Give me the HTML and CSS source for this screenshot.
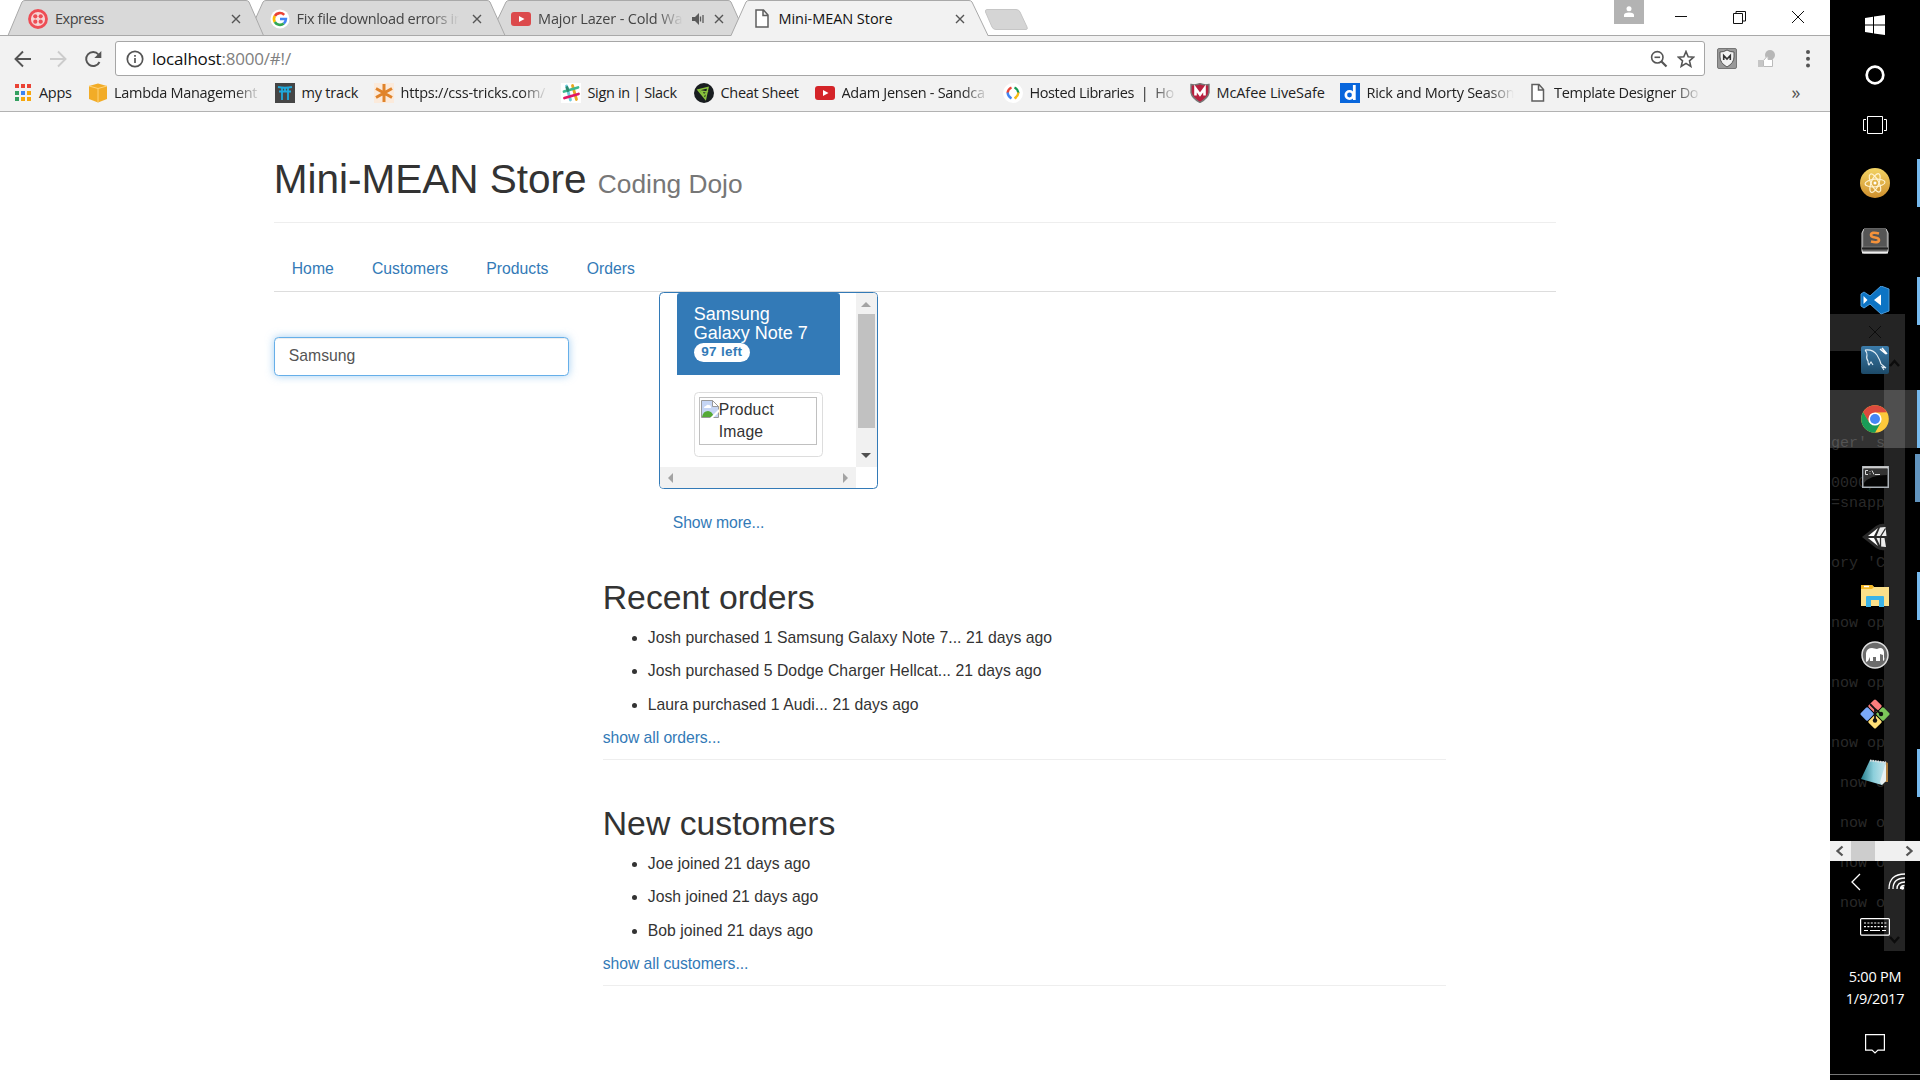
FILE: index.html
```html
<!DOCTYPE html>
<html lang="en">
<head>
<meta charset="utf-8">
<title>Mini-MEAN Store</title>
<link rel="stylesheet" href="styles.css">
</head>
<body>
<div class="desktop">
<div class="browser">
  <header class="tabstrip">
    <svg class="tab-shapes" width="1830" height="36" viewBox="0 0 1830 36">
      <g fill="#d9d9d9" stroke="#a9a9a9">
        <path d="M490 35.500L506 2Q507 .5 509 .5H728Q730 .5 731 2L746 35.500z"/>
        <path d="M248 35.500L263 2Q264 .5 266 .5H487Q489 .5 490 2L505 35.500z"/>
        <path d="M8 35.500L22 2Q23 .5 25 .5H246Q248 .5 249 2L263.500 35.500z"/>
      </g>
      <path d="M0 35.500H1830" stroke="#a9a9a9"/>
      <path d="M731 36L746 2Q747 .5 749 .5H969Q971 .5 972 2L988 36z" fill="#f2f2f2"/>
      <path d="M731 35.500L746 2Q747 .5 749 .5H969Q971 .5 972 2L988 35.500" fill="none" stroke="#a9a9a9"/>
      <path d="M987 9.500H1016Q1019 9.500 1020 12L1027 27Q1028 29.500 1026 29.500H996Q993 29.500 992 27L985.500 12Q985 9.500 987 9.500z" fill="#d5d5d5" stroke="#c6c6c6"/>
    </svg>
    <div class="tab">
      <svg class="fav" viewBox="0 0 20 20"><circle cx="10" cy="10" r="8.500" fill="#f6d5d5" stroke="#ee4d55" stroke-width="2.800"/><g fill="#ee4d55"><circle cx="7.300" cy="7.300" r="2.100"/><circle cx="12.700" cy="7.300" r="2.100"/><circle cx="7.300" cy="12.700" r="2.100"/><circle cx="12.700" cy="12.700" r="2.100"/></g></svg>
      <span class="tab-title">Express</span>
      <svg class="close" viewBox="0 0 10 10"><path d="M1 1l8 8M9 1l-8 8"/></svg>
    </div>
    <div class="tab">
      <svg class="fav" viewBox="0 0 20 20"><circle cx="10" cy="10" r="9.500" fill="#fff"/><g fill="none" stroke-width="2.600"><path d="M14.200 5.800A6 6 0 0 0 4.800 7" stroke="#ea4335"/><path d="M4.800 7A6 6 0 0 0 4.800 13" stroke="#fbbc05"/><path d="M4.800 13A6 6 0 0 0 13.800 14.500" stroke="#34a853"/><path d="M13.800 14.500A6 6 0 0 0 15.900 10H10" stroke="#4285f4"/></g></svg>
      <span class="tab-title fade search-tab">Fix file download errors in</span>
      <svg class="close" viewBox="0 0 10 10"><path d="M1 1l8 8M9 1l-8 8"/></svg>
    </div>
    <div class="tab">
      <svg class="fav" viewBox="0 0 20 20"><rect y="3" width="20" height="14" rx="3" fill="#dc4a4c"/><path d="M8 7l5.500 3L8 13z" fill="#fff"/></svg>
      <span class="tab-title fade audio">Major Lazer - Cold Wat</span>
      <svg class="speaker" viewBox="0 0 13 12"><path d="M0 4h3l4-4v12L3 8H0z" fill="#5a5a5a"/><path d="M8.500 3.500v5M11 2v8" stroke="#5a5a5a" stroke-width="1.300"/></svg>
      <svg class="close" viewBox="0 0 10 10"><path d="M1 1l8 8M9 1l-8 8"/></svg>
    </div>
    <div class="tab active">
      <svg class="fav" viewBox="0 0 20 20"><path d="M3 1h7.500l4.500 5v12H3zM10 1v5.500h5" fill="#fff" stroke="#5f5f5f" stroke-width="1.500"/></svg>
      <span class="tab-title">Mini-MEAN Store</span>
      <svg class="close" viewBox="0 0 10 10"><path d="M1 1l8 8M9 1l-8 8"/></svg>
    </div>
    <div class="window-controls">
      <span class="profile"><svg width="12" height="12" viewBox="0 0 12 12" fill="#fff"><circle cx="6" cy="2.800" r="2.500"/><path d="M1 11V9q0-2.500 5-2.500T11 9v2z"/></svg></span>
      <svg width="12" height="14" viewBox="0 0 12 14"><path d="M0 6.500h12"/></svg>
      <svg width="13" height="14" viewBox="0 0 13 14"><path d="M.5 3.500h9v10h-9zM3 3V1.500h9.500v9.500H10"/></svg>
      <svg width="14" height="14" viewBox="0 0 14 14"><path d="M1 1l12 12M13 1L1 13"/></svg>
    </div>
  </header>

  <div class="toolbar">
    <svg class="nav-icon" viewBox="0 0 18 18"><path d="M17 9H2M9 1.500L1.500 9 9 16.500"/></svg>
    <svg class="nav-icon off" viewBox="0 0 18 18"><path d="M1 9h15M9 1.500L16.500 9 9 16.500"/></svg>
    <svg class="nav-icon" viewBox="0 0 18 18"><path d="M15.500 12A7 7 0 1 1 14.500 4.500"/><path d="M17.300 1v7h-7z" fill="#555" stroke="none"/></svg>
    <div class="omnibox">
      <svg width="18" height="18" viewBox="0 0 18 18" fill="none" stroke="#555" stroke-width="1.700"><circle cx="9" cy="9" r="7.700"/><path d="M9 8v5M9 5v1.800"/></svg>
      <span class="url">localhost<span class="path">:8000/#!/</span></span>
      <svg class="magnify" width="18" height="18" viewBox="0 0 18 18" fill="none" stroke="#555" stroke-width="1.600"><circle cx="7.300" cy="7.300" r="5.700"/><path d="M4.500 7.300h5.600"/><path d="M11.500 11.500l5 5" stroke-width="2.200"/></svg>
      <svg width="18" height="18" viewBox="0 0 18 18" fill="none" stroke="#555" stroke-width="1.600"><path d="M9 1.500l2.200 5.200 5.500.5-4.200 3.700 1.300 5.500L9 13.400l-4.800 3 1.300-5.500L1.300 7.200l5.500-.5z"/></svg>
    </div>
    <svg class="ext-shield" width="20" height="21" viewBox="0 0 20 21"><rect x=".5" y=".5" width="19" height="20" rx="1.500" fill="#999" stroke="#777"/><path d="M3 4q4 0 7-2 3 2 7 2v5q0 6-7 10-7-4-7-10z" fill="#f3f3f3" stroke="#555"/><path d="M6.700 12V7.500l3.300 3.500 3.300-3.500V12" fill="none" stroke="#333" stroke-width="1.600"/></svg>
    <svg class="ext-thumb" width="18" height="18" viewBox="0 0 18 18"><circle cx="12" cy="5" r="5" fill="#b7b7b7"/><path d="M0 10h5v7H0z" fill="#c6c6c6"/><path d="M5.500 10.500l3.500-4q1.700 0 1 3H14.500v7h-9z" fill="#fff" stroke="#bbb"/></svg>
    <svg class="ext-menu" width="4" height="20" viewBox="0 0 4 20" fill="#555"><circle cx="2" cy="3" r="2"/><circle cx="2" cy="9.700" r="2"/><circle cx="2" cy="16.400" r="2"/></svg>
  </div>

  <nav class="bookmarks">
    <a class="bm apps"><svg viewBox="0 0 20 20"><g fill="#ea4335"><path d="M0 1h4v4H0zM6 1h4v4H6zM12 1h4v4h-4z"/></g><path d="M0 8h4v4H0zM0 14h4v4H0z" fill="#34a060"/><path d="M6 8h4v4H6z" fill="#3c83f2"/><path d="M12 8h4v4h-4zM6 14h4v4H6zM12 14h4v4h-4z" fill="#f6a60c"/></svg><span>Apps</span></a>
    <a class="bm lambda"><svg viewBox="0 0 20 20"><path d="M0 3l9-2.500L18 3v13l-9 3.500L0 16z" fill="#f2ac27"/><path d="M0 3l9 2.500L18 3M9 5.500v14" stroke="#ffd37a" fill="none"/></svg><span class="fade">Lambda Management</span></a>
    <a class="bm track"><svg viewBox="0 0 20 20"><path d="M0 0h20v20H0z" fill="#454545"/><path d="M3 4q7 1.500 14 0M4 8.500h12M7 5v12M13 5v12M10 5v3" stroke="#1ea9dc" stroke-width="1.800" fill="none"/></svg><span>my track</span></a>
    <a class="bm tricks"><svg viewBox="0 0 20 20"><path d="M0 0h20v20H0z" fill="#fbeadb"/><path d="M10 1v18M2 5.500l16 9M18 5.500l-16 9" stroke="#e0832a" stroke-width="3"/></svg><span class="fade">https://css-tricks.com/</span></a>
    <a class="bm slack"><svg viewBox="0 0 20 20"><path d="M0 0h20v20H0z" fill="#fff"/><g stroke-width="2.800" stroke-linecap="round"><path d="M5.500 3l4 14" stroke="#6ecadc"/><path d="M11.500 2.500l4 14" stroke="#e9a820"/><path d="M3 8.500l14-4" stroke="#3eb991"/><path d="M3.500 15l14-4" stroke="#e01765"/><path d="M6 4.500l1 3" stroke="#2c8a6f"/></g></svg><span>Sign in | Slack</span></a>
    <a class="bm cheat"><svg viewBox="0 0 20 20"><circle cx="10" cy="10" r="10" fill="#191d20"/><path d="M4 7l10-2.500L11.500 16zM7 8l6 1-3 3z" fill="none" stroke="#89c23c" stroke-width="1.500"/></svg><span>Cheat Sheet</span></a>
    <a class="bm tube"><svg viewBox="0 0 20 20"><rect y="3" width="20" height="14" rx="3" fill="#d42428"/><path d="M8 7l5.500 3L8 13z" fill="#fff"/></svg><span class="fade">Adam Jensen - Sandca</span></a>
    <a class="bm hosted"><svg viewBox="0 0 20 20"><circle cx="10" cy="10" r="10" fill="#fff"/><g fill="none" stroke-width="2.300"><path d="M8.500 4.500Q5 6 4.500 10" stroke="#ea4335"/><path d="M4.500 9.500q.5 4 4 6" stroke="#4285f4"/><path d="M11.500 4.500Q15 6 15.500 10" stroke="#179a52"/><path d="M15.500 9.500q-.5 4-4 6" stroke="#f7bb16"/></g></svg><span class="fade">Hosted Libraries &nbsp;|&nbsp; Ho</span></a>
    <a class="bm mcafee"><svg viewBox="0 0 20 20"><path d="M1 1.500q5 1 9-1 4 2 9 1v8Q18 15 10 19.500 2 15 1 9.500z" fill="#b9203f" stroke="#777" stroke-width="1.400"/><path d="M5.500 12.500V5.500l4.500 6 4.500-6v7" fill="none" stroke="#fff" stroke-width="2.600"/></svg><span>McAfee LiveSafe</span></a>
    <a class="bm daily"><svg viewBox="0 0 20 20"><path d="M0 0h20v20H0z" fill="#0866dc"/><circle cx="9.500" cy="12" r="3.700" fill="none" stroke="#fff" stroke-width="2.600"/><path d="M14.300 2v15" stroke="#fff" stroke-width="2.800"/></svg><span class="fade">Rick and Morty Season</span></a>
    <a class="bm template"><svg viewBox="0 0 20 20"><path d="M1 1.500h7l4.500 5V18H1zM7.500 1.500V7h5" fill="#fff" stroke="#5f5f5f" stroke-width="1.500"/></svg><span class="fade">Template Designer Do</span></a>
    <span class="more">»</span>
  </nav>

  <main class="page">
    <div class="container">
      <h1 class="title">Mini-MEAN Store <small>Coding Dojo</small></h1>
      <nav class="tabs"><a>Home</a><a>Customers</a><a>Products</a><a>Orders</a></nav>
      <div class="columns">
        <aside class="filter"><input class="search" type="text" value="Samsung"></aside>
        <section class="feed">
          <div class="product">
            <div class="product-view">
              <div class="product-body">
                <div class="product-head"><h3>Samsung<br>Galaxy Note 7</h3><span class="badge">97 left</span></div>
                <div class="thumb"><div class="missing">
                  <svg width="18" height="18" viewBox="0 0 18 18"><path d="M.5.500h11l6 6v11H.5z" fill="#c5d5f4" stroke="#999"/><path d="M11.500.500v6h6z" fill="#fff" stroke="#999"/><path d="M3 8q0-2 2-2 1-2 3-1 2 0 2 3z" fill="#fff"/><path d="M1 17q1-6 6-6 4 0 6 6z" fill="#54a936"/><path d="M9 18L18 9v3l-6 6z" fill="#fff"/></svg>
                  <span>Product<br>Image</span></div></div>
              </div>
              <div class="vbar"><svg width="10" height="5" viewBox="0 0 10 5"><path d="M0 5l5-5 5 5z" fill="#a3a3a3"/></svg><i class="knob"></i><svg width="10" height="5" viewBox="0 0 10 5"><path d="M0 0l5 5 5-5z" fill="#505050"/></svg></div>
            </div>
            <div class="hbar"><svg width="5" height="10" viewBox="0 0 5 10"><path d="M5 0L0 5l5 5z" fill="#a3a3a3"/></svg><svg width="5" height="10" viewBox="0 0 5 10"><path d="M0 0l5 5-5 5z" fill="#a3a3a3"/></svg></div>
          </div>
          <a class="show-more">Show more...</a>
          <div class="block">
            <h2>Recent orders</h2>
            <ul><li>Josh purchased 1 Samsung Galaxy Note 7... 21 days ago</li><li>Josh purchased 5 Dodge Charger Hellcat... 21 days ago</li><li>Laura purchased 1 Audi... 21 days ago</li></ul>
            <a>show all orders...</a>
          </div>
          <div class="block">
            <h2>New customers</h2>
            <ul><li>Joe joined 21 days ago</li><li>Josh joined 21 days ago</li><li>Bob joined 21 days ago</li></ul>
            <a>show all customers...</a>
          </div>
        </section>
      </div>
    </div>
  </main>
</div>

<aside class="taskbar">
  <div class="ghost">
    <div class="ghost-title"></div>
    <div class="ghost-scroll"></div>
    <svg class="ghost-marks" width="90" height="660" viewBox="0 0 90 660" fill="none" stroke="#0c0c0c"><path d="M39 12l12 12M51 12l-12 12"/><path d="M60 52l4.500-5 4.500 5M60 623l4.500 5 4.500-5" stroke-width="2.500"/></svg>
    <pre class="ghost-text">
ger' s

0000,
=snapp


ory 'C


now op


now op


now op

 now o

 now o

 now o

 now o</pre>
  </div>
  <div class="btn sys"><svg width="20" height="20" viewBox="0 0 20 20" fill="#fff"><path d="M0 3l8-1.200V9.500H0zM9 1.600L20 0v9.500H9zM0 10.500h8v7.800L0 17zM9 10.500h11V20L9 18.400z"/></svg></div>
  <div class="btn sys"><svg width="20" height="20" viewBox="0 0 20 20"><circle cx="10" cy="10" r="8.300" fill="none" stroke="#fff" stroke-width="2.700"/></svg></div>
  <div class="btn sys"><svg width="24" height="18" viewBox="0 0 24 18" fill="none" stroke="#fff"><path d="M4.500.500h15v17h-15zM3 3.500H.500v11H3M21 3.500h2.500v11H21"/></svg></div>
  <div class="btn first on"><svg width="30" height="30" viewBox="0 0 30 30"><defs><linearGradient id="ga" x2="0" y2="1"><stop stop-color="#f3d465"/><stop offset="1" stop-color="#cf8f2d"/></linearGradient></defs><circle cx="15" cy="15" r="15" fill="url(#ga)"/><g fill="none" stroke="#fff3d0" stroke-width="1.200"><ellipse cx="15" cy="15" rx="10" ry="3.800" transform="rotate(-5 15 15)"/><ellipse cx="15" cy="15" rx="10" ry="3.800" transform="rotate(62 15 15)"/><ellipse cx="15" cy="15" rx="10" ry="3.800" transform="rotate(112 15 15)"/></g><circle cx="15" cy="15" r="1.500" fill="#fff"/></svg></div>
  <div class="btn sublime"><svg width="28" height="26" viewBox="0 0 28 26"><path d="M3 1h22l2 4v18q0 2-2 2H3q-2 0-2-2V5z" fill="#666" stroke="#ddd"/><path d="M3 .5h22V18H3z" fill="#555"/><path d="M1 20.500h26" stroke="#222" stroke-width="2"/><path d="M1 24.500h26" stroke="#eee" stroke-width="2"/><path d="M18 5.500q-8-2-8 1.500 0 2 4 2.500t4 2.500q0 3.500-8 1.500" fill="none" stroke="#f6923a" stroke-width="2.600"/></svg></div>
  <div class="btn on"><svg width="30" height="29" viewBox="0 0 30 29"><path d="M21 0l8 3v22l-8 3L10 18l-6 4-3-2V8l3-2 6 4z" fill="#0d74c4" stroke="#4c9ad8"/><path d="M3.500 10v8l4-4zM21 8.500v11L14 14z" fill="#fff"/></svg></div>
  <div class="btn"><svg width="28" height="28" viewBox="0 0 28 28"><defs><linearGradient id="gm" x2="0" y2="1"><stop stop-color="#3b7ba9"/><stop offset="1" stop-color="#1d4a68"/></linearGradient></defs><rect width="28" height="28" rx="2" fill="url(#gm)"/><path d="M4 4q8-1 12 5 3 5 4 9l5 4-4-1 2 3M4 4q2 2 2 5-1 4 1 6 0 3 1 4l2-3 2 3" fill="none" stroke="#e3eef5" stroke-width="1.100"/><path d="M19 3l6 5M21 2l5 6" stroke="#fff" stroke-width="1.500"/></svg></div>
  <div class="btn full"><svg width="28" height="28" viewBox="0 0 28 28"><circle cx="14" cy="14" r="13.800" fill="#fdc93b"/><path d="M2.050 7.100A13.800 13.800 0 0 1 26 7.200L14 7.500 8 17.500z" fill="#dc4a3d"/><path d="M2.050 7.100A13.800 13.800 0 0 0 14 27.800L19.800 17.400 8.200 17.400z" fill="#1a9c58"/><circle cx="14" cy="14" r="6.600" fill="#fff"/><circle cx="14" cy="14" r="5" fill="#4486f5"/></svg></div>
  <div class="btn on wide"><svg width="27" height="22" viewBox="0 0 27 22"><path d="M.750.750h25.500v20.500H.750z" fill="#050505" stroke="#aab0b6" stroke-width="1.500"/><path d="M1 1.500h25" stroke="#ccc" stroke-width="2"/><path d="M2 3h23v6Q8 9 2 17z" fill="#333"/><path d="M6 4.500H3.500v4H6M8 5v.8M8 7.500v.8M10 4.500l2 4M13 8.500h5" fill="none" stroke="#ddd"/></svg></div>
  <div class="btn"><svg width="28" height="28" viewBox="0 0 28 28"><path d="M1 14L15 3q5-3 9-2l3 13-3 13q-4 1-9-2z" fill="#2a2a2a"/><path d="M7 13L17 5l-4 8zM7 15l6 0 4 8z" fill="#fff"/><path d="M19 4.500l5.500-.5 1 9-6-.0-4 0zM15.500 15h4l4 0 1.500 9-5.500-.5z" fill="#eee"/><path d="M19.500 14v10M19.500 13.500l5-8" stroke="#2a2a2a" stroke-width="1.300"/></svg></div>
  <div class="btn on"><svg width="28" height="24" viewBox="0 0 28 24"><path d="M0 1h11l2 2h15v19H0z" fill="#fbe08a"/><path d="M0 1h11l2 2-2 2H0z" fill="#f5b824"/><path d="M3 2.500h5" stroke="#fff" stroke-width="1.500"/><path d="M5 23V13q0-1 1-1h16q1 0 1 1v10h-5v-7H10v7z" fill="#3bb3e8"/></svg></div>
  <div class="btn"><svg width="28" height="28" viewBox="0 0 28 28"><circle cx="14" cy="14" r="13" fill="#6c6c6c" stroke="#e0e0e0" stroke-width="1.500"/><path d="M5 21V12q1-5 6-5l5 1q6-3 7 3v5q1 3-1 4v-6l-3-1v7h-4v-4h-3v4H9v-4l-2 4z" fill="#fff"/></svg></div>
  <div class="btn"><svg width="30" height="30" viewBox="0 0 30 30"><g transform="rotate(45 15 15)"><rect x="4.300" y="4.300" width="10.200" height="10.200" rx="1.500" fill="#fb7d7d"/><rect x="15.500" y="4.300" width="10.200" height="10.200" rx="1.500" fill="#7cc65a"/><rect x="4.300" y="15.500" width="10.200" height="10.200" rx="1.500" fill="#7aa9f7"/><rect x="15.500" y="15.500" width="10.200" height="10.200" rx="1.500" fill="#ffdf76"/></g><path d="M10 5l5 5v11M15 10l6 5" stroke="#111" stroke-width="1.800" fill="none"/><circle cx="15" cy="21.500" r="2.200" fill="#111"/><circle cx="21" cy="15" r="2.200" fill="#111"/></svg></div>
  <div class="btn on"><svg width="28" height="27" viewBox="0 0 28 27"><defs><linearGradient id="gn"><stop stop-color="#267d8c"/><stop offset=".5" stop-color="#8ccfdb"/><stop offset="1" stop-color="#c9e6ec"/></linearGradient></defs><path d="M25 3l2 1v19h-5z" fill="#b08040"/><path d="M9 1L25 3 21 26 0 20z" fill="url(#gn)"/><path d="M25 3v19l-4 4-2-3z" fill="#e8f1f3"/><path d="M9 1.500l16 2" stroke="#ddd" stroke-width="2" stroke-dasharray="1.500 1"/></svg></div>
  <div class="console-bar"><svg width="90" height="20" viewBox="0 0 90 20"><path d="M21 0h24v20H21z" fill="#cdcdcd"/><path d="M12.500 5.500L7.500 10l5 4.500M76.500 5.500l5 4.500-5 4.500" fill="none" stroke="#555" stroke-width="2.300"/></svg></div>
  <div class="tray"><svg width="10" height="18" viewBox="0 0 10 18"><path d="M9 1L1 9l8 8"/></svg><svg width="17" height="17" viewBox="0 0 17 17"><path d="M1 16Q1 1 17 1M5 16Q5 5 17 5M9 16q0-7 8-7M12.500 16q0-3.500 4-3.500"/><circle cx="14.500" cy="15" r="1.700" fill="#fff" stroke="none"/></svg></div>
  <div class="keyboard"><svg width="30" height="18" viewBox="0 0 30 18"><rect x=".6" y=".6" width="28.800" height="16.500" rx="1"/><path d="M4 5h23M4 8.700h23" stroke-dasharray="2 1.400"/><path d="M4 12.500h4M10 12.500h10M22 12.500h4"/></svg></div>
  <div class="clock">5:00 PM<br>1/9/2017</div>
  <div class="notify"><svg width="20" height="20" viewBox="0 0 20 20"><path d="M.6.600h18.800v15.500H13L10 19l-3-2.900H.6z"/></svg></div>
  <div class="peek"></div>
</aside>
</div>
</body>
</html>
```
FILE: styles.css
```css
* { box-sizing: border-box; }
body { margin: 0; overflow: hidden; background: #fff; }
svg { display: block; flex: none; }
.desktop { display: flex; width: 1920px; height: 1080px; }
.browser { width: 1830px; flex: none; font-family: "Open Sans", "Noto Sans", sans-serif; }

/* Tab strip */
.tabstrip { position: relative; display: flex; height: 36px; padding-left: 28px; background: #fff; }
.tab-shapes { position: absolute; left: 0; top: 0; }
.tab { position: relative; display: flex; align-items: center; width: 241.500px; height: 36px; padding: 2px 30px 0 0; font-size: 14.500px; line-height: 20px; letter-spacing: -0.5px; color: #444; }
.tab.active { color: #111; letter-spacing: -0.05px; }
.fav { width: 20px; height: 20px; margin-right: 7px; }
.tab-title { flex: 1; min-width: 0; margin-top: -1px; white-space: nowrap; overflow: hidden; }
.tab.active .tab-title { margin-left: -1px; }
.search-tab { letter-spacing: -0.35px; }
.fade { -webkit-mask-image: linear-gradient(90deg, #000 82%, transparent); mask-image: linear-gradient(90deg, #000 82%, transparent); }
.tab .close { width: 10px; height: 10px; margin-left: 9px; margin-right: -1px; fill: none; stroke: #555; stroke-width: 1.400; }
.speaker { width: 13px; height: 12px; margin-left: 9px; }
.tab-title.fade { margin-right: 4px; }
.tab-title.audio { margin-right: 0; letter-spacing: -0.15px; }
.window-controls { position: relative; display: flex; align-items: center; margin-left: auto; padding: 0 25px 2px 0; gap: 45.500px; fill: none; stroke: #111; }
.profile { display: flex; justify-content: center; align-items: center; width: 30px; height: 24px; margin: -10px -14px 0 0; background: #b3b3b3; stroke: none; }

/* Toolbar */
.toolbar { display: flex; align-items: center; height: 44px; padding: 1px 22px 0 14px; background: #f2f2f2; }
.nav-icon { width: 18px; height: 18px; margin-right: 17px; fill: none; stroke: #555; stroke-width: 1.900; }
.nav-icon.off { stroke: #ccc; }
.nav-icon:nth-child(3) { margin-right: 13px; }
.omnibox { display: flex; align-items: center; width: 1590px; height: 35px; padding: 0 9px 0 10px; border: 1px solid #a6a6a6; border-radius: 3px; background: #fff; }
.url { margin-left: 8px; font-size: 17px; letter-spacing: -0.2px; color: #111; }
.path { color: #808080; }
.magnify { margin-left: auto; margin-right: 9px; }
.ext-shield { margin-left: 12px; }
.ext-thumb { margin-left: 21px; }
.ext-menu { margin-left: auto; margin-right: -2px; }

/* Bookmarks bar */
.bookmarks { display: flex; align-items: center; height: 32px; padding: 0 0 5px 15px; background: #f2f2f2; border-bottom: 1px solid #b2b2b2; font-size: 14.500px; letter-spacing: -0.3px; color: #222; }
.bm { display: flex; align-items: center; height: 20px; line-height: 20px; white-space: nowrap; }
.bm svg { width: 20px; height: 20px; margin-right: 6.500px; }
.bm .fade { width: 147px; overflow: hidden; }
.apps { width: 74px; }
.apps svg { margin-right: 4px; }
.lambda { width: 186px; }
.lambda svg { margin-right: 5px; }
.track { width: 99px; letter-spacing: -0.2px; }
.tricks { width: 187px; letter-spacing: -0.2px; }
.slack { width: 133px; letter-spacing: -0.35px; }
.cheat { width: 121px; }
.tube { width: 188px; }
.hosted { width: 187px; letter-spacing: -0.4px; }
.mcafee { width: 150px; letter-spacing: -0.1px; }
.daily { width: 191px; letter-spacing: -0.25px; }
.template svg { margin-right: 3px; }
.more { margin-left: auto; margin-right: 30px; font-size: 18px; color: #555; line-height: 20px; margin-top: -3px; }

/* Store page */
.page { display: flex; justify-content: center; font: 15.750px/22.500px "Liberation Sans", Arial, sans-serif; color: #333; }
.container { width: 1282.500px; }
.page a { color: #337ab7; }
.page h1, .page h2, .page h3 { font-weight: 500; line-height: 1.1; margin: 0; }
.page .title { height: 111px; padding-top: 45px; border-bottom: 1px solid #eee; font-size: 40.500px; font-weight: 400; }
.title small { font-size: 26.300px; color: #777; }
.tabs { display: flex; height: 69px; padding: 35px 0 0 18px; border-bottom: 1px solid #ddd; gap: 38.200px; }
.columns { display: flex; }
.filter { width: 329px; padding-top: 45px; }
.search { display: block; width: 295.500px; height: 39px; padding: 0 13px 1px 14px; border: 1px solid #66afe9; border-radius: 4.500px; outline: none; box-shadow: inset 0 1px 1px rgba(0,0,0,.075), 0 0 9px rgba(102,175,233,.6); font: 15.750px "Liberation Sans", Arial, sans-serif; color: #555; }
.feed { width: 843px; }
.product { width: 219px; height: 197px; margin-left: 56px; border: 1px solid #337ab7; border-radius: 4.500px; overflow: hidden; background: #fff; }
.product-view { display: flex; justify-content: space-between; height: 174px; }
.product-body { width: 163px; margin-left: 17px; }
.product-head { height: 82px; padding: 12px 17px 0; background: #337ab7; border-radius: 3px 3px 0 0; color: #fff; }
.page .product-head h3 { font-size: 18px; line-height: 19px; white-space: nowrap; }
.badge { display: block; width: 56px; height: 19px; border-radius: 10px; background: #fff; color: #337ab7; font-size: 13.500px; font-weight: 700; line-height: 18px; letter-spacing: .25px; text-align: center; }
.thumb { width: 129px; height: 65px; margin: 17px 0 0 17px; padding: 4px; border: 1px solid #ddd; border-radius: 4.500px; }
.missing { display: flex; width: 118px; height: 48px; padding: 1px; border: 1px solid #c0c0c0; line-height: 22px; letter-spacing: .15px; }
.missing svg { margin-top: 1px; }
.vbar { display: flex; flex-direction: column; align-items: center; width: 21px; padding-top: 9px; background: #f1f1f1; }
.vbar .knob { width: 17px; height: 114px; margin: 7px 0 25px; background: #c1c1c1; }
.hbar { display: flex; justify-content: space-between; align-items: center; width: 196px; height: 21px; padding: 0 8px; background: #f1f1f1; }
.show-more { display: block; height: 45px; padding: 23px 0 0 70px; letter-spacing: -0.1px; }
.block { height: 226px; padding-top: 45px; border-bottom: 1px solid #eee; }
.block h2 { height: 48px; font-size: 33.750px; }
.block ul { margin: 0; padding-left: 45px; letter-spacing: .03px; }
.block li { height: 33.300px; }
.block a { display: block; letter-spacing: -0.07px; }

/* Taskbar */
.taskbar { position: relative; display: flex; flex-direction: column; width: 90px; height: 1080px; background: #000; overflow: hidden; }
.ghost { position: absolute; inset: 0; }
.ghost-title { position: absolute; left: 0; top: 314px; width: 75px; height: 37px; background: #242424; }
.ghost-scroll { position: absolute; left: 54px; top: 351px; width: 21px; height: 600px; background: #242424; }
.ghost-marks { position: absolute; left: 0; top: 314px; }
.ghost-text { position: absolute; left: 1px; top: 434px; width: 53px; margin: 0; overflow: hidden; font: 15px/20px "Liberation Mono", monospace; color: #292929; }
.btn { position: relative; display: flex; justify-content: center; align-items: center; height: 59px; flex: none; }
.btn.sys { height: 50px; }
.btn.first { margin-top: 3px; }
.btn.sublime { padding-bottom: 2px; }
.btn.on::after { content: ""; position: absolute; right: 0; top: 6px; width: 3px; height: 48px; background: #76b9ed; }
.btn.wide::after { width: 5px; background: #6193bd; }
.btn.full { height: 58px; margin-top: 1px; background: rgba(255,255,255,.2); }
.btn.full::after { content: ""; position: absolute; right: 0; top: 0; width: 3px; height: 58px; background: #76b9ed; }
.btn.wide { padding-bottom: 2px; }
.console-bar { position: relative; height: 20px; margin-top: 39px; background: #f0f0f0; }
.tray { position: relative; display: flex; justify-content: space-between; align-items: center; height: 41px; padding: 0 15px 0 21px; fill: none; stroke: #fff; stroke-width: 1.300; }
.keyboard { position: relative; display: flex; justify-content: center; padding-top: 16px; height: 64px; fill: none; stroke: #fff; stroke-width: 1.200; }
.clock { position: relative; height: 68px; font: 14.500px/22px "Open Sans", "Noto Sans", sans-serif; letter-spacing: -0.25px; color: #fff; text-align: center; }
.notify { position: relative; display: flex; justify-content: center; height: 40px; fill: none; stroke: #fff; stroke-width: 1.200; }
.peek { position: relative; height: 1px; background: #777; }
```
